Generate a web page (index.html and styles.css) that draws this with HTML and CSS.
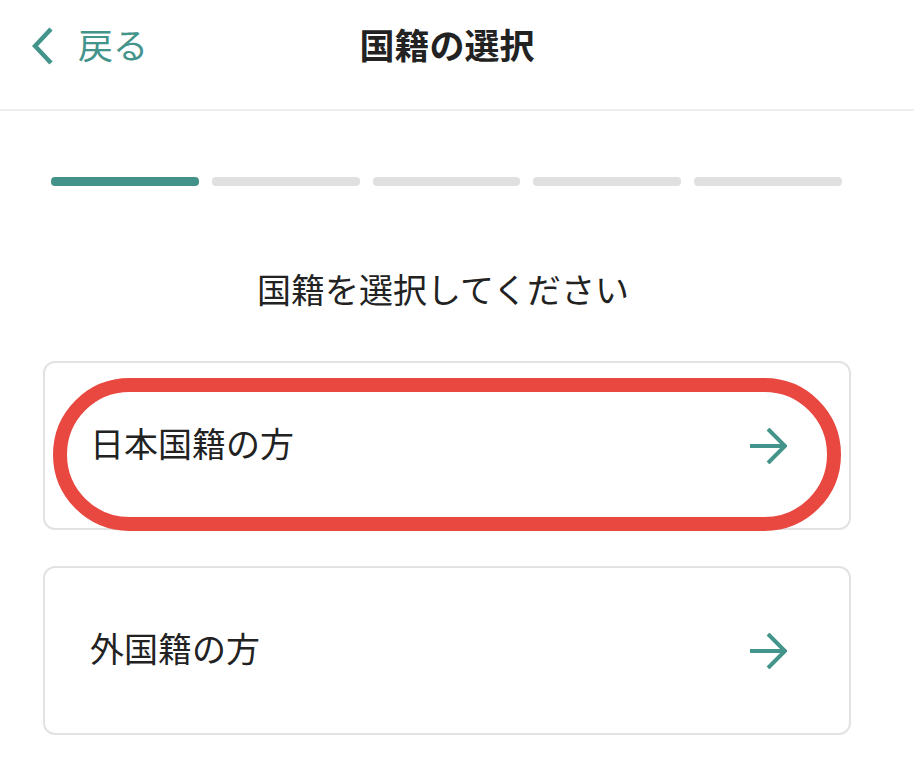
FILE: index.html
```html
<!DOCTYPE html>
<html lang="ja">
<head>
    <meta charset="UTF-8">
    <meta name="viewport" content="width=device-width, initial-scale=1.0">
    <title>国籍の選択</title>
    <link rel="stylesheet" href="styles.css">
</head>
<body>

    <header class="top-bar">
        <div class="top-bar-inner">
            <a href="#" class="back-link">
                <svg class="back-icon" width="22" height="38" viewBox="0 0 22 38">
                    <path d="M19 2 L3 19 L19 36" fill="none" stroke="#43948a" stroke-width="4.5"/>
                </svg>
                <span>戻る</span>
            </a>
            <h1 class="page-title">国籍の選択</h1>
            <div></div>
        </div>
    </header>

    <main class="content">
        <!-- Step progress -->
        <div class="steps">
            <span class="step active"></span>
            <span class="step"></span>
            <span class="step"></span>
            <span class="step"></span>
            <span class="step"></span>
        </div>

        <h2 class="question">国籍を選択してください</h2>

        <div class="options">
            <a href="#" class="option">
                <span class="option-label">日本国籍の方</span>
                <svg class="arrow" width="37" height="36" viewBox="0 0 37 36">
                    <path d="M0 18 H35 M18 1 L35 18 L18 35" fill="none" stroke="#43948a" stroke-width="4"/>
                </svg>
                <span class="highlight"></span>
            </a>
            <a href="#" class="option">
                <span class="option-label">外国籍の方</span>
                <svg class="arrow" width="37" height="36" viewBox="0 0 37 36">
                    <path d="M0 18 H35 M18 1 L35 18 L18 35" fill="none" stroke="#43948a" stroke-width="4"/>
                </svg>
            </a>
        </div>
    </main>

</body>
</html>
```

FILE: styles.css
```css
body {
    font-family: "Noto Sans CJK JP", "Noto Sans", sans-serif;
    margin: 0;
    padding: 0;
    background: white;
    color: #222;
}
.top-bar {
    border-bottom: 2px solid #eeeeee;
    height: 109px;
}
.top-bar-inner {
    display: grid;
    grid-template-columns: 1fr auto 1fr;
    align-items: center;
    padding: 16px 52px 0 32px;
    height: 56px;
}
.back-link {
    display: flex;
    align-items: center;
    gap: 24px;
    color: #43948a;
    text-decoration: none;
    font-size: 35px;
    line-height: 56px;
}
.back-icon {
    display: block;
    margin-top: 4px;
}
.page-title {
    margin: 0;
    font-size: 35px;
    font-weight: bold;
    line-height: 56px;
}
.content {
    padding: 0 63px 0 43px;
}
.steps {
    display: flex;
    gap: 13px;
    margin: 66px 9px 0 8px;
}
.step {
    flex: 1;
    height: 9px;
    border-radius: 4px;
    background: #e0e0e0;
}
.step.active {
    background: #43928a;
}
.question {
    margin: 79px 8px 0 0;
    text-align: center;
    font-size: 34px;
    font-weight: normal;
    line-height: 48px;
}
.options {
    display: flex;
    flex-direction: column;
    gap: 36px;
    margin-top: 48px;
}
.option {
    position: relative;
    display: flex;
    align-items: center;
    justify-content: space-between;
    height: 169px;
    box-sizing: border-box;
    padding: 0 62px 0 45px;
    border: 2px solid #e2e2e2;
    border-radius: 12px;
    color: #222;
    text-decoration: none;
}
.option-label {
    font-size: 34px;
    line-height: 48px;
    margin-top: -6px;
}
.arrow {
    display: block;
}
.highlight {
    position: absolute;
    top: 15px;
    left: 8px;
    right: 8px;
    bottom: -3px;
    border: 14px solid #e8483f;
    border-radius: 80px;
}
```
